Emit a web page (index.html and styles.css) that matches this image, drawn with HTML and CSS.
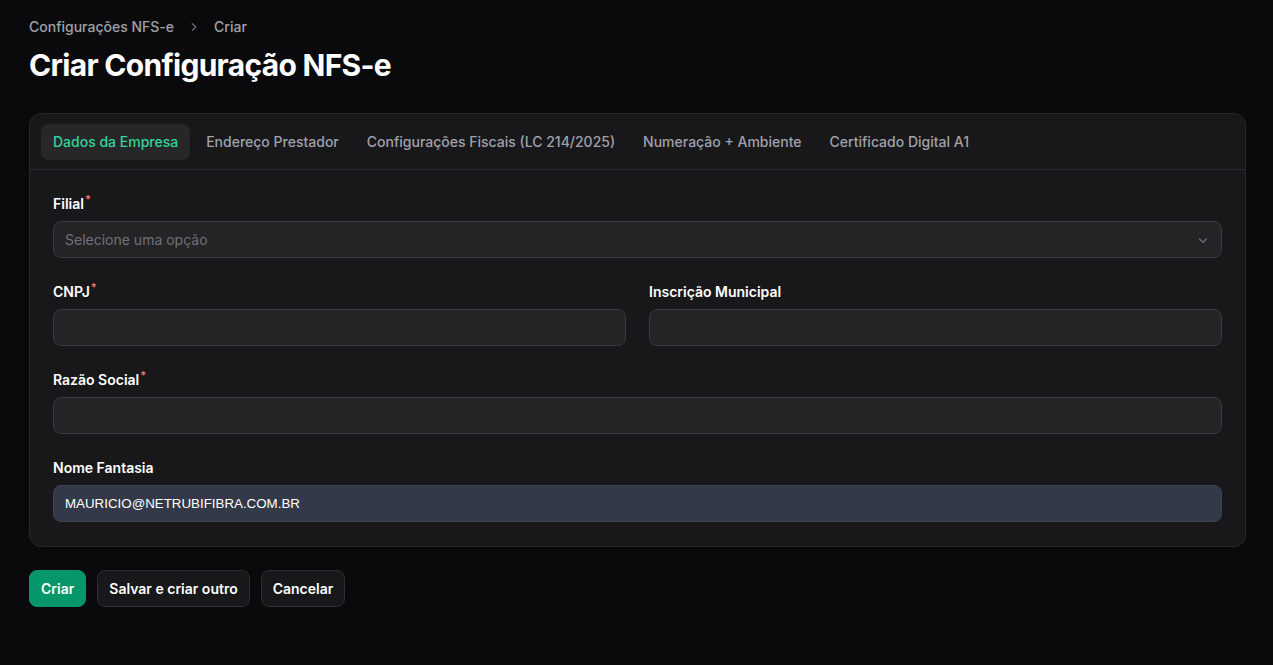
FILE: index.html
```html
<!DOCTYPE html>
<html lang="pt-BR">
<head>
    <meta charset="UTF-8">
    <meta name="viewport" content="width=device-width, initial-scale=1.0">
    <title>Criar Configuração NFS-e</title>
    <link rel="stylesheet" href="styles.css">
</head>
<body>

    <div class="page">
        <nav class="breadcrumbs">
            <span>Configurações NFS-e</span>
            <svg class="crumb-sep" width="16" height="16" viewBox="0 0 20 20" fill="currentColor"><path fill-rule="evenodd" d="M7.21 14.77a.75.75 0 0 1 .02-1.06L11.17 10 7.23 6.29a.75.75 0 1 1 1.04-1.08l4.5 4.250a.75.75 0 0 1 0 1.08l-4.5 4.25a.75.75 0 0 1-1.06-.02Z" clip-rule="evenodd"/></svg>
            <span>Criar</span>
        </nav>

        <h1>Criar Configuração NFS-e</h1>

        <div class="card">
            <div class="tabs">
                <button class="tab active">Dados da Empresa</button>
                <button class="tab">Endereço Prestador</button>
                <button class="tab">Configurações Fiscais (LC 214/2025)</button>
                <button class="tab">Numeração + Ambiente</button>
                <button class="tab">Certificado Digital A1</button>
            </div>

            <div class="form">
                <div class="field full">
                    <label>Filial<sup>*</sup></label>
                    <div class="input select">
                        <span class="placeholder">Selecione uma opção</span>
                        <svg width="16" height="16" viewBox="0 0 20 20" fill="currentColor"><path fill-rule="evenodd" d="M5.22 8.22a.75.75 0 0 1 1.06 0L10 11.940l3.72-3.72a.75.75 0 1 1 1.06 1.06l-4.25 4.25a.75.75 0 0 1-1.06 0L5.22 9.28a.75.75 0 0 1 0-1.06Z" clip-rule="evenodd"/></svg>
                    </div>
                </div>

                <div class="field">
                    <label>CNPJ<sup>*</sup></label>
                    <input class="input" type="text">
                </div>

                <div class="field">
                    <label>Inscrição Municipal</label>
                    <input class="input" type="text">
                </div>

                <div class="field full">
                    <label>Razão Social<sup>*</sup></label>
                    <input class="input" type="text">
                </div>

                <div class="field full">
                    <label>Nome Fantasia</label>
                    <input class="input autofilled" type="text" value="MAURICIO@NETRUBIFIBRA.COM.BR">
                </div>
            </div>
        </div>

        <div class="actions">
            <button class="btn primary">Criar</button>
            <button class="btn">Salvar e criar outro</button>
            <button class="btn">Cancelar</button>
        </div>
    </div>

</body>
</html>
```

FILE: styles.css
```css
* {
    box-sizing: border-box;
}
body {
    margin: 0;
    background-color: #0a0a0c;
    color: #fff;
    font-family: Inter, "Noto Sans", sans-serif;
}
.page {
    padding: 17px 27px 40px 29px;
}
.breadcrumbs {
    display: flex;
    align-items: center;
    gap: 10px;
    font-size: 14px;
    font-weight: 500;
    line-height: 20px;
    color: #a1a1aa;
}
.crumb-sep {
    color: #71717a;
    margin: 0 2px;
}
h1 {
    margin: 10px 0 0;
    font-size: 30px;
    line-height: 36px;
    font-weight: 700;
    letter-spacing: -0.7px;
}
.card {
    margin-top: 30px;
    background-color: #18181b;
    border: 1px solid #27272a;
    border-radius: 12px;
}
.tabs {
    display: flex;
    gap: 4px;
    padding: 10px 11px 9px;
    border-bottom: 1px solid #2c2c30;
}
.tab {
    font-family: inherit;
    font-size: 14px;
    font-weight: 500;
    line-height: 20px;
    padding: 8px 12px;
    border: none;
    border-radius: 8px;
    background: none;
    color: #a1a1aa;
}
.tab.active {
    background-color: #27272a;
    color: #34d399;
}
.form {
    display: grid;
    grid-template-columns: 1fr 1fr;
    column-gap: 23px;
    row-gap: 24px;
    padding: 24px 23px 24px;
}
.field {
    display: flex;
    flex-direction: column;
    gap: 7px;
}
.field.full {
    grid-column: 1 / -1;
}
label {
    font-size: 14px;
    font-weight: 600;
    line-height: 20px;
    color: #fff;
}
label sup {
    color: #f87171;
    font-size: 11px;
    line-height: 0;
    margin-left: 1px;
}
.input {
    height: 37px;
    width: 100%;
    padding: 0 11px;
    background-color: #242427;
    border: 1px solid #3a3a3e;
    border-radius: 8px;
    color: #fff;
    font-family: inherit;
    font-size: 14px;
    outline: none;
}
.select {
    display: flex;
    align-items: center;
    justify-content: space-between;
    color: #71717a;
    padding-right: 10px;
}
.placeholder {
    color: #71717a;
}
.autofilled {
    background-color: #333948;
    border-color: #3d4352;
    font-family: "Liberation Sans", Arial, sans-serif;
    font-size: 13.33px;
}
.actions {
    display: flex;
    gap: 11px;
    margin-top: 23px;
}
.btn {
    height: 37px;
    padding: 0 11px;
    font-family: inherit;
    font-size: 14px;
    font-weight: 600;
    color: #fff;
    background-color: #18181b;
    border: 1px solid #2e2e32;
    border-radius: 8px;
}
.btn.primary {
    background-color: #059669;
    border-color: #059669;
}
```
